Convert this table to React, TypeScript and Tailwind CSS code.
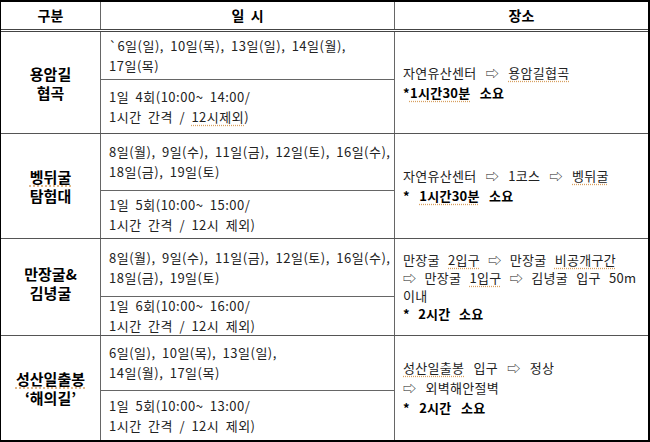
const FONT = "font-['Malgun_Gothic','Noto_Sans_CJK_KR',sans-serif]";

function Sq({ children }: { children: React.ReactNode }) {
  return (
    <span className="underline decoration-dotted decoration-[#d8a060] underline-offset-[3px]">
      {children}
    </span>
  );
}

type Row = {
  name: React.ReactNode;
  dates: React.ReactNode;
  times: React.ReactNode;
  place: React.ReactNode;
  h: string;
  h1: string;
  h2: string;
  lead: string;
  ws: string;
  namePad?: string;
};

const rows: Row[] = [
  {
    name: (
      <>
        용암길
        <br />
        협곡
      </>
    ),
    dates: (
      <>
        `6일(일), 10일(목), 13일(일), 14일(월),
        <br />
        17일(목)
      </>
    ),
    times: (
      <>
        1일 4회(10:00~ 14:00/
        <br />
        1시간 간격 / <Sq>12시제외</Sq>)
      </>
    ),
    place: (
      <>
        자연유산센터 ⇨ <Sq>용암길협곡</Sq>
        <br />
        <b className="text-black">
          *<Sq>1시간30분</Sq> 소요
        </b>
      </>
    ),
    h: "h-[101px]",
    h1: "h-[48px]",
    h2: "h-[53px]",
    lead: "leading-[20px]",
    ws: "[word-spacing:6px]",
  },
  {
    name: (
      <>
        <Sq>벵뒤굴</Sq>
        <br />
        탐험대
      </>
    ),
    dates: (
      <>
        8일(월), 9일(수), 11일(금), 12일(토), 16일(수),
        <br />
        18일(금), 19일(토)
      </>
    ),
    times: (
      <>
        1일 5회(10:00~ 15:00/
        <br />
        1시간 간격 / 12시 제외)
      </>
    ),
    place: (
      <>
        자연유산센터 ⇨ 1코스 ⇨ <Sq>벵뒤굴</Sq>
        <br />
        <b className="text-black">
          * <Sq>1시간30분</Sq> 소요
        </b>
      </>
    ),
    h: "h-[105px]",
    h1: "h-[57px]",
    h2: "h-[47px]",
    lead: "leading-[20px]",
    ws: "[word-spacing:6px]",
  },
  {
    name: (
      <>
        만장굴&amp;
        <br />
        김녕굴
      </>
    ),
    dates: (
      <>
        8일(월), 9일(수), 11일(금), 12일(토), 16일(수),
        <br />
        18일(금), 19일(토)
      </>
    ),
    times: (
      <>
        1일 6회(10:00~ 16:00/
        <br />
        1시간 간격 / 12시 제외)
      </>
    ),
    place: (
      <>
        만장굴 <Sq>2입구</Sq> ⇨ 만장굴 <Sq>비공개구간</Sq>
        <br />⇨ 만장굴 <Sq>1입구</Sq> ⇨ 김녕굴 입구 50m
        <br />
        이내
        <br />
        <b className="text-black">* 2시간 소요</b>
      </>
    ),
    h: "h-[97px]",
    h1: "h-[58px]",
    h2: "h-[38px]",
    lead: "leading-[18px]",
    ws: "[word-spacing:5px]",
    namePad: "pb-[8px]",
  },
  {
    name: (
      <>
        <Sq>성산일출봉</Sq>
        <br />
        ‘해의길’
      </>
    ),
    dates: (
      <>
        6일(일), 10일(목), 13일(일),
        <br />
        14일(월), 17일(목)
      </>
    ),
    times: (
      <>
        1일 5회(10:00~ 13:00/
        <br />
        1시간 간격 / 12시 제외)
      </>
    ),
    place: (
      <>
        <Sq>성산일출봉</Sq> 입구 ⇨ 정상
        <br />⇨ 외벽해안절벽
        <br />
        <b className="text-black">* 2시간 소요</b>
      </>
    ),
    h: "h-[105px]",
    h1: "h-[55px]",
    h2: "h-[49px]",
    lead: "leading-[20px]",
    ws: "[word-spacing:6px]",
  },
];

export default function App() {
  return (
    <div className={`w-[650px] h-[442px] bg-white ${FONT} text-[#222]`}>
      <div className="w-[650px] border-l border-t-2 border-r-2 border-b-2 border-black">
        <div className="flex h-[30px] border-b-[3px] border-double border-[#444] text-[14px] font-bold text-black">
          <div className="flex w-[100px] shrink-0 items-center justify-center border-r border-[#666]">구분</div>
          <div className="flex w-[294px] shrink-0 items-center justify-center border-r border-[#666]">일&nbsp;&nbsp;시</div>
          <div className="flex min-w-0 flex-1 items-center justify-center">장소</div>
        </div>
        {rows.map((r, i) => (
          <div key={i} className={`flex ${r.h} ${i > 0 ? "border-t border-[#555]" : ""}`}>
            <div
              className={`flex w-[100px] shrink-0 items-center justify-center border-r border-[#666] text-center text-[15px] font-bold leading-[19px] text-black ${r.namePad ?? ""}`}
            >
              <div>{r.name}</div>
            </div>
            <div className="flex w-[294px] shrink-0 flex-col overflow-hidden whitespace-nowrap border-r border-[#666] text-[13px] leading-[20px] tracking-[0.5px] [word-spacing:3px]">
              <div className={`flex items-center px-2 ${r.h1} border-b border-[#666]`}>
                <div>{r.dates}</div>
              </div>
              <div className={`flex items-center px-2 ${r.h2}`}>
                <div>{r.times}</div>
              </div>
            </div>
            <div
              className={`flex min-w-0 flex-1 items-center overflow-hidden whitespace-nowrap px-2 text-[13px] ${r.lead} tracking-[0.3px] ${r.ws}`}
            >
              <div>{r.place}</div>
            </div>
          </div>
        ))}
      </div>
    </div>
  );
}
